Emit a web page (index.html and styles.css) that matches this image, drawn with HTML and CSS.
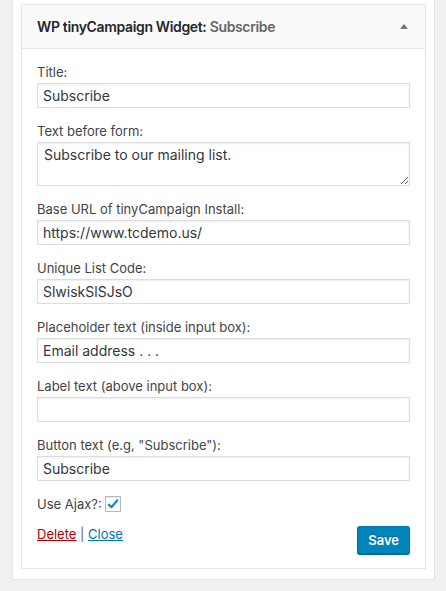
FILE: index.html
```html
<!DOCTYPE html>
<html>
<head>
<meta charset="utf-8">
<link rel="stylesheet" href="styles.css">
</head>
<body>
<div class="card">
  <div class="widget">
    <div class="widget-top">
      <h3 class="widget-title">WP tinyCampaign Widget: <span class="in-title">Subscribe</span></h3>
      <span class="toggle"></span>
    </div>
    <div class="widget-body">
      <div class="field">
        <label class="lbl">Title:</label>
        <input class="txt" type="text" value="Subscribe">
      </div>
      <div class="field">
        <label class="lbl">Text before form:</label>
        <textarea class="area">Subscribe to our mailing list.</textarea>
      </div>
      <div class="field">
        <label class="lbl">Base URL of tinyCampaign Install:</label>
        <input class="txt" type="text" value="https://www.tcdemo.us/">
      </div>
      <div class="field">
        <label class="lbl">Unique List Code:</label>
        <input class="txt" type="text" value="SlwiskSlSJsO">
      </div>
      <div class="field">
        <label class="lbl">Placeholder text (inside input box):</label>
        <input class="txt" type="text" value="Email address . . .">
      </div>
      <div class="field">
        <label class="lbl">Label text (above input box):</label>
        <input class="txt" type="text" value="">
      </div>
      <div class="field">
        <label class="lbl">Button text (e.g, "Subscribe"):</label>
        <input class="txt" type="text" value="Subscribe">
      </div>
      <div class="ajax">
        <span>Use Ajax?:</span>
        <span class="check"><svg width="14" height="14" viewBox="0 0 14 14"><path d="M2.2 7.2 L5.4 10.2 L11.8 2.8" fill="none" stroke="#1e8cbe" stroke-width="2.4" stroke-linejoin="round"/></svg></span>
      </div>
      <div class="actions">
        <div class="links"><a class="del" href="#">Delete</a> <span class="sep">|</span> <a class="close" href="#">Close</a></div>
        <button class="save">Save</button>
      </div>
    </div>
  </div>
</div>
</body>
</html>
```
FILE: styles.css
```css
html, body {
  margin: 0;
  padding: 0;
  background: #f1f1f1;
}
body {
  font-family: Inter, "Liberation Sans", Arial, sans-serif;
  font-size: 13px;
  color: #444;
}
.card {
  margin-left: 12px;
  width: 423px;
  box-sizing: border-box;
  background: #fff;
  border: 1px solid #e5e5e5;
  border-top: 0;
  box-shadow: 0 1px 1px rgba(0,0,0,.04);
  padding: 4px 8px 10px 8px;
}
.widget {
  border: 1px solid #e5e5e5;
  background: #fff;
}
.widget-top {
  height: 43px;
  background: #fafafa;
  border-bottom: 1px solid #e5e5e5;
  display: flex;
  align-items: center;
  justify-content: space-between;
  padding: 0 17px 0 15px;
}
.widget-title {
  margin: 0;
  font-size: 14px;
  font-weight: 600;
  color: #23282d;
  letter-spacing: -0.35px;
}
.in-title {
  color: #666;
}
.toggle {
  width: 0;
  height: 0;
  border-left: 4px solid transparent;
  border-right: 4px solid transparent;
  border-bottom: 5px solid #72777c;
  margin-top: -1px;
}
.widget-body {
  padding: 14px 15px 14px 15px;
}
.field {
  margin-bottom: 14px;
}
.lbl {
  display: block;
  line-height: 18px;
  margin-bottom: 2px;
  color: #444;
}
.txt, .area {
  display: block;
  width: 100%;
  box-sizing: border-box;
  margin: 0;
  border: 1px solid #ddd;
  box-shadow: inset 0 1px 2px rgba(0,0,0,.07);
  background: #fff;
  color: #32373c;
  font-family: inherit;
  font-size: 14px;
  outline: none;
  border-radius: 0;
}
.txt {
  height: 25px;
  padding: 2px 5px;
}
.area {
  height: 44px;
  padding: 2px 6px;
  line-height: 20px;
  resize: vertical;
  margin-bottom: 5px;
}
.ajax {
  display: flex;
  align-items: center;
  gap: 3px;
  margin-top: 4px;
  height: 18px;
}
.check {
  width: 16px;
  height: 16px;
  box-sizing: border-box;
  border: 1px solid #b4b9be;
  box-shadow: inset 0 1px 2px rgba(0,0,0,.1);
  display: flex;
  align-items: center;
  justify-content: center;
  background: #fff;
}
.actions {
  display: flex;
  justify-content: space-between;
  align-items: flex-start;
  margin-top: 13px;
}
.links {
  line-height: 18px;
  margin-top: -1px;
}
.del {
  color: #a00;
}
.close {
  color: #0073aa;
}
.sep {
  color: #666;
}
.save {
  height: 28px;
  padding: 0 10px 1px;
  background: #0085ba;
  border: 1px solid #0073aa;
  border-bottom-color: #006799;
  border-radius: 3px;
  box-shadow: 0 1px 0 #006799;
  color: #fff;
  font-family: inherit;
  font-size: 13px;
  font-weight: 600;
  text-shadow: 0 -1px 1px #006799;
}
```
